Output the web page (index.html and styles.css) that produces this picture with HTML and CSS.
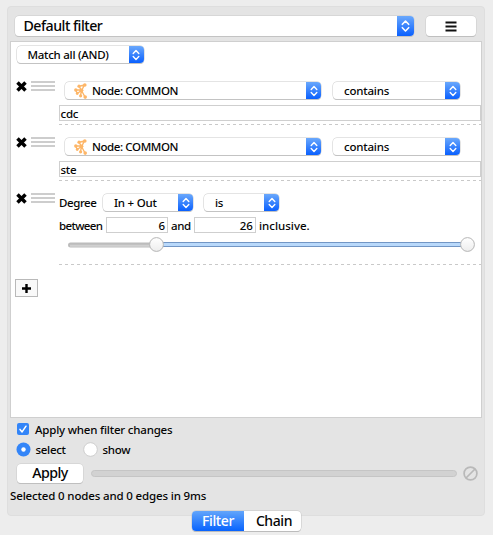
FILE: index.html
```html
<!DOCTYPE html>
<html lang="en">
<head>
<meta charset="utf-8">
<title>Filter</title>
<link rel="stylesheet" href="styles.css">
</head>
<body>
<svg width="0" height="0" class="defs">
  <symbol id="chevrons" viewBox="0 0 8 12"><path d="M1.2 4.5 4 1.6 6.8 4.5M1.2 7.5 4 10.4 6.8 7.5" fill="none" stroke="#fff" stroke-width="1.4" stroke-linecap="round" stroke-linejoin="round"/></symbol>
  <symbol id="close" viewBox="0 0 11 11"><path d="M1.5 1.5 9.5 9.5M9.5 1.5 1.5 9.5" fill="none" stroke="#000" stroke-width="3.5"/></symbol>
  <symbol id="network" viewBox="0 0 14 16"><path d="M5 3.2 7.5 7.5 10.5 2M5 3.2 10.5 2M1.8 7H7.5M7.5 7.5 3.2 10.5M1.8 7 3.2 10.5M7.5 7.5 6.5 12.5M7.5 7.5 11 14" fill="none" stroke="#fdb668" stroke-width="1.4"/><g fill="#fdb668"><circle cx="5" cy="3.2" r="1.6"/><circle cx="10.8" cy="2" r="1.8"/><circle cx="1.8" cy="7" r="1.7"/><circle cx="7.5" cy="7.3" r="1.9"/><circle cx="3.2" cy="10.5" r="1.4"/><circle cx="6.6" cy="12.8" r="1.6"/><circle cx="11.2" cy="14.1" r="1.8"/></g></symbol>
</svg>
<main class="panel">
  <header class="toolbar">
    <div class="combo combo-large"><span class="t-default">Default filter</span><i class="arrow"><svg><use href="#chevrons"/></svg></i></div>
    <button class="menu-button"><svg width="12" height="11" viewBox="0 0 12 11"><path d="M.5 1.5H11.5M.5 5.5H11.5M.5 9.5H11.5" stroke="#111" stroke-width="2"/></svg></button>
  </header>
  <section class="filters">
    <div class="combo match"><span class="t-match">Match all (AND)</span><i class="arrow"><svg><use href="#chevrons"/></svg></i></div>
    <article class="row">
      <svg class="close"><use href="#close"/></svg>
      <i class="grip"></i>
      <div class="editor">
        <div class="attr">
          <div class="combo node"><svg class="network"><use href="#network"/></svg><span class="t-node">Node: COMMON</span><i class="arrow"><svg><use href="#chevrons"/></svg></i></div>
          <div class="combo contains"><span class="t-contains">contains</span><i class="arrow"><svg><use href="#chevrons"/></svg></i></div>
        </div>
        <div class="field text-field">cdc</div>
        <i class="dash"></i>
      </div>
    </article>
    <article class="row">
      <svg class="close"><use href="#close"/></svg>
      <i class="grip"></i>
      <div class="editor">
        <div class="attr">
          <div class="combo node"><svg class="network"><use href="#network"/></svg><span class="t-node">Node: COMMON</span><i class="arrow"><svg><use href="#chevrons"/></svg></i></div>
          <div class="combo contains"><span class="t-contains">contains</span><i class="arrow"><svg><use href="#chevrons"/></svg></i></div>
        </div>
        <div class="field text-field">ste</div>
        <i class="dash"></i>
      </div>
    </article>
    <article class="row row-degree">
      <svg class="close"><use href="#close"/></svg>
      <i class="grip"></i>
      <div class="editor">
        <div class="degree">
          <span class="degree-label">Degree</span>
          <div class="combo inout"><span class="t-inout">In + Out</span><i class="arrow"><svg><use href="#chevrons"/></svg></i></div>
          <div class="combo is"><span>is</span><i class="arrow"><svg><use href="#chevrons"/></svg></i></div>
        </div>
        <div class="range">
          <span class="between">between</span><div class="field number">6</div><span class="and">and</span><div class="field number">26</div><span class="inclusive">inclusive.</span>
        </div>
        <svg class="slider" width="414" height="16" viewBox="0 0 414 16">
          <defs><linearGradient id="knob" x2="0" y2="1"><stop stop-color="#fff"/><stop offset="1" stop-color="#ededed"/></linearGradient></defs>
          <rect x="2" y="5.5" width="90" height="5" rx="2.5" fill="#bcbcbc"/><path d="M4 8.7H90" stroke="#d0d0d0" stroke-width="2"/>
          <rect x="90.5" y="5.5" width="309" height="4" fill="#b9d9fb" stroke="#7296c5"/>
          <circle cx="90.5" cy="7.5" r="6.9" fill="url(#knob)" stroke="#b5b5b5"/><circle cx="401.5" cy="7.5" r="6.9" fill="url(#knob)" stroke="#b5b5b5"/>
        </svg>
        <i class="dash"></i>
      </div>
    </article>
    <button class="add"><svg width="9" height="9" viewBox="0 0 9 9"><path d="M4.5 0V9M0 4.5H9" stroke="#000" stroke-width="2.4"/></svg></button>
  </section>
  <footer class="controls">
    <label class="check"><svg width="12" height="12" viewBox="0 0 12 12"><rect width="12" height="12" rx="2" fill="#3385f8"/><path d="M3 6.4 5.1 8.9 9 3.2" fill="none" stroke="#fff" stroke-width="1.5" stroke-linecap="round" stroke-linejoin="round"/></svg><span class="t-auto">Apply when filter changes</span></label>
    <div class="radios">
      <svg width="15" height="15"><circle cx="7.5" cy="7.5" r="7" fill="#3385f8"/><circle cx="7.5" cy="7.5" r="2.2" fill="#fff"/></svg><span class="t-select">select</span>
      <svg width="15" height="15"><circle cx="7.5" cy="7.5" r="6.8" fill="#fff" stroke="#c7c7c7" stroke-width=".8"/></svg><span class="t-show">show</span>
    </div>
    <div class="run">
      <button class="apply"><span class="t-apply">Apply</span></button>
      <i class="progress"></i>
      <svg width="15" height="15" viewBox="0 0 15 15"><path d="M3 12 12 3" stroke="#b9b9b9" stroke-width="1.7"/><circle cx="7.5" cy="7.5" r="6.4" fill="none" stroke="#b9b9b9" stroke-width="1.7"/></svg>
    </div>
    <p class="status"><span class="t-status">Selected 0 nodes and 0 edges in 9ms</span></p>
  </footer>
</main>
<nav class="tabs"><span class="tab active"><b>Filter</b></span><span class="tab"><b class="t-chain">Chain</b></span></nav>
</body>
</html>
```
FILE: styles.css
```css
* { box-sizing: border-box; }
body {
  margin: 0;
  width: 493px;
  height: 535px;
  overflow: hidden;
  padding: 6px 7px 0;
  background: #ededed;
  color: #050505;
  font: 500 11.5px/15px "Noto Sans", "Open Sans", sans-serif;
  letter-spacing: -.2px;
}
.defs { display: none; }
svg { display: block; flex: none; }
i { display: block; }
span { white-space: nowrap; }
button { padding: 0; color: inherit; font: inherit; letter-spacing: inherit; }
.panel {
  width: 478px;
  height: 510px;
  padding: 10px 3px 0;
  background: #e4e4e4;
  border: 1px solid #dedede;
  border-radius: 4px;
}
.toolbar { display: flex; gap: 12px; height: 25px; margin-top: -1px; padding-left: 4px; }
.combo {
  display: flex;
  align-items: center;
  flex: none;
  height: 17px;
  padding-left: 11px;
  background: #fff;
  border-radius: 4px;
  box-shadow: 0 0 0 .5px #c9c9c9, 0 1px .5px #bdbdbd;
}
.combo span { position: relative; top: -.5px; }
.arrow {
  display: flex;
  align-items: center;
  justify-content: center;
  align-self: stretch;
  width: 14.5px;
  margin-left: auto;
  border-radius: 0 4px 4px 0;
  background: linear-gradient(#6aa8fc, #0a60fe);
}
.arrow svg { width: 8px; height: 12px; }
.combo-large { width: 399px; height: 20px; padding-left: 8.5px; font-size: 14.2px; letter-spacing: -.5px; }
.combo-large .arrow { width: 17px; }
.combo-large .arrow svg { width: 9px; height: 14px; }
.combo-large span { top: -1px; }
.menu-button, .apply {
  display: grid;
  place-items: center;
  background: #fff;
  border: 0;
  border-radius: 4px;
  box-shadow: 0 0 0 .5px #c9c9c9, 0 1px .5px #b5b5b5;
}
.menu-button { width: 50px; height: 20px; }
.filters {
  width: 472px;
  height: 377px;
  margin-left: -1px;
  padding: 4px 0 0 5px;
  background: #fff;
  border: 1px solid #cfcfcf;
}
.match { width: 127px; margin: 0 0 18px .5px; letter-spacing: -.27px; }
.row { display: flex; height: 56px; }
.close { width: 11px; height: 11px; margin-top: -.5px; }
.grip {
  width: 24px;
  height: 10px;
  margin: 0 4px 0;
  background: linear-gradient(#cdcdcd 0 2px, #fff 2px 4px, #cdcdcd 4px 6px, #fff 6px 8px, #cdcdcd 8px);
}
.editor { width: 423px; padding-top: 1px; }
.attr { display: flex; gap: 12px; padding-left: 6px; height: 23px; }
.node { width: 256px; letter-spacing: -.4px; }
.network { width: 14px; height: 16px; margin-left: -2px; margin-right: 4px; }
.contains { width: 127px; }
.field { height: 16px; padding: 0 2px; border: 1px solid #cfcfcf; line-height: 15px; background: #fff; }
.text-field { padding-left: .5px; }
.dash { height: 1px; margin-top: 3px; background: repeating-linear-gradient(90deg, #c9c9c9 0 3px, transparent 3px 6px); }
.row-degree { height: 86px; }
.degree { display: flex; height: 23px; }
.degree-label { width: 44px; line-height: 17px; letter-spacing: -.4px; }
.inout { width: 90px; margin-right: 11px; }
.is { width: 75px; }
.range { display: flex; line-height: 17px; }
.between { width: 47px; letter-spacing: -.65px; }
.number { width: 62px; text-align: right; letter-spacing: 0; }
.and { width: 26px; padding-left: 3px; letter-spacing: -.4px; }
.inclusive { padding-left: 3px; letter-spacing: 0; }
.slider { margin: 3px 0 0 7px; }
.row-degree .dash { margin-top: 11px; }
.add {
  display: grid;
  place-items: center;
  width: 23px;
  height: 18px;
  margin: 0 0 0 -1px;
  background: #f9f9f9;
  border: 1px solid #b9b9b9;
}
.controls { padding: 5px 0 0 6px; }
.check { display: flex; align-items: center; gap: 6px; height: 12px; }
.radios { display: flex; align-items: center; height: 15px; margin: 7px 0 7px -1px; }
.t-select { width: 43px; margin: 0 4px 0 4.5px; }
.t-show { margin-left: 5px; }
.t-show, .t-select { letter-spacing: -.3px; }
.run { display: flex; align-items: center; height: 20px; margin-top: -1px; }
.apply { width: 66px; height: 19px; font-size: 14.2px; letter-spacing: -.5px; }
.t-apply { margin-top: -2px; }
.progress { width: 366px; height: 7px; margin: 0 6px 0 8px; background: #d2d2d2; border: 1px solid #c5c5c5; border-radius: 4px; }
.status { margin: 5px 0 0 -7px; letter-spacing: -.15px; }
.tabs {
  position: relative;
  display: flex;
  width: 109px;
  height: 20px;
  margin: -5px 0 0 185px;
  border-radius: 4px;
  background: #fff;
  box-shadow: 0 0 0 .5px #c4c4c4, 0 1px .5px #b5b5b5;
  font-size: 14px;
  letter-spacing: -.4px;
}
.tab { display: grid; place-items: center; width: 57px; }
.tab b { font-weight: 500; margin-top: -2px; }
.t-chain { padding-left: 3px; }
.active { width: 52px; color: #fff; background: linear-gradient(#62a5fb, #0763fe); border-radius: 4px 0 0 4px; }
```
